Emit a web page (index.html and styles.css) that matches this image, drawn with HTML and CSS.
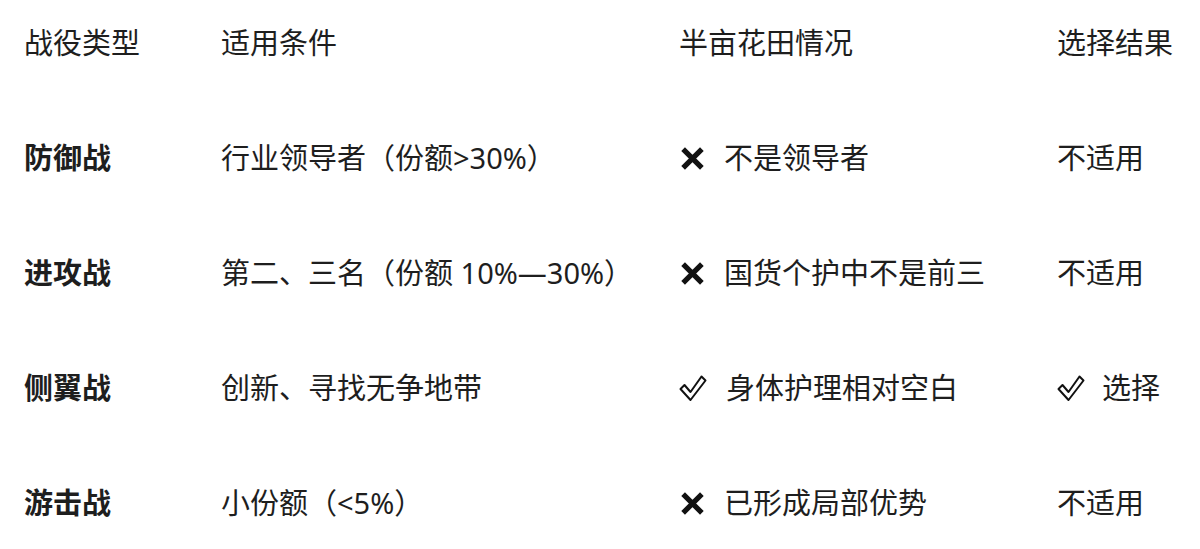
FILE: index.html
```html
<!DOCTYPE html>
<html lang="zh-CN">
<head>
<meta charset="utf-8">
<title>战役类型</title>
<link rel="stylesheet" href="styles.css">
</head>
<body>
<div class="table">
  <div class="cell head">战役类型</div>
  <div class="cell head">适用条件</div>
  <div class="cell head">半亩花田情况</div>
  <div class="cell head">选择结果</div>

  <div class="cell type">防御战</div>
  <div class="cell">行业领导者（份额&gt;30%）</div>
  <div class="cell status"><svg class="icon cross" width="25" height="23" viewBox="0 0 24 22"><path d="M3 2 L21 20 M21 2 L3 20"/></svg><span>不是领导者</span></div>
  <div class="cell">不适用</div>

  <div class="cell type">进攻战</div>
  <div class="cell">第二、三名（份额 10%—30%）</div>
  <div class="cell status"><svg class="icon cross" width="25" height="23" viewBox="0 0 24 22"><path d="M3 2 L21 20 M21 2 L3 20"/></svg><span>国货个护中不是前三</span></div>
  <div class="cell">不适用</div>

  <div class="cell type">侧翼战</div>
  <div class="cell">创新、寻找无争地带</div>
  <div class="cell status"><svg class="icon check" width="28" height="27" viewBox="0 0 28 27"><path d="M1.5 14 L11.5 25 L26.5 5.5 L22.5 1.5 L11.5 17 L5.5 10 Z"/></svg><span>身体护理相对空白</span></div>
  <div class="cell status pick"><svg class="icon check" width="28" height="27" viewBox="0 0 28 27"><path d="M1.5 14 L11.5 25 L26.5 5.5 L22.5 1.5 L11.5 17 L5.5 10 Z"/></svg><span>选择</span></div>

  <div class="cell type">游击战</div>
  <div class="cell">小份额（&lt;5%）</div>
  <div class="cell status"><svg class="icon cross" width="25" height="23" viewBox="0 0 24 22"><path d="M3 2 L21 20 M21 2 L3 20"/></svg><span>已形成局部优势</span></div>
  <div class="cell">不适用</div>
</div>
</body>
</html>
```

FILE: styles.css
```css
html, body {
  margin: 0;
  padding: 0;
  background: #ffffff;
}

body {
  font-family: "Noto Sans", "Noto Sans CJK SC", sans-serif;
  color: #1e1e1e;
  font-size: 29px;
}

.table {
  display: grid;
  grid-template-columns: 197px 458px 378px 1fr;
  grid-auto-rows: 40px;
  row-gap: 75px;
  padding: 23px 0 0 24px;
}

.cell {
  display: flex;
  align-items: center;
  line-height: 40px;
  white-space: nowrap;
}

.type {
  font-weight: 700;
}

.status {
  gap: 19px;
}

.pick {
  gap: 17px;
}

.icon {
  flex: none;
  display: block;
}

.cross {
  width: 25px;
  height: 23px;
  margin-left: 1px;
}

.cross path {
  fill: none;
  stroke: #111;
  stroke-width: 5;
  stroke-linecap: butt;
}

.check {
  width: 28px;
  height: 27px;
}

.check path {
  fill: none;
  stroke: #111;
  stroke-width: 2;
  stroke-linejoin: round;
}
```
